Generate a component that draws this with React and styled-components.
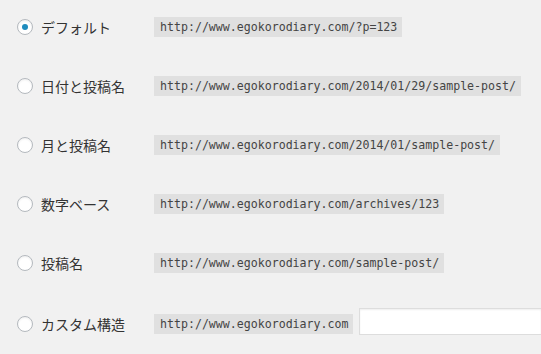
import styled, { createGlobalStyle } from "styled-components";

const GlobalStyle = createGlobalStyle`
  html, body {
    margin: 0;
    padding: 0;
    background: #f1f1f1;
    overflow: hidden;
  }
  body {
    font-family: "Noto Sans CJK JP", "Noto Sans", sans-serif;
    color: #333;
  }
`;

const List = styled.div`
  display: flex;
  flex-direction: column;
  gap: 39px;
  padding: 17px 0 20px 17px;
`;

const Row = styled.label`
  display: grid;
  grid-template-columns: 137px auto 1fr;
  align-items: center;
  min-height: 20px;
  cursor: pointer;
`;

const Choice = styled.span`
  display: flex;
  align-items: center;
  gap: 8px;
  font-size: 14px;
  line-height: 20px;
  color: #333;
  white-space: nowrap;
`;

const Radio = styled.span`
  box-sizing: border-box;
  flex: none;
  width: 16px;
  height: 16px;
  border-radius: 50%;
  border: 1px solid #b4b9be;
  background: #fff;
  box-shadow: inset 0 1px 2px rgba(0, 0, 0, 0.07);
  display: flex;
  align-items: center;
  justify-content: center;

  &::before {
    content: "";
    display: ${(p) => (p.$checked ? "block" : "none")};
    width: 6px;
    height: 6px;
    border-radius: 50%;
    background: #1e8cbe;
  }
`;

const Code = styled.code`
  justify-self: start;
  font-family: "DejaVu Sans Mono", "Liberation Mono", monospace;
  font-size: 11.6px;
  line-height: 20px;
  height: 20px;
  padding: 0 5px 0 6px;
  background: rgba(0, 0, 0, 0.07);
  color: #444;
  white-space: nowrap;
`;

const Structure = styled.input`
  box-sizing: border-box;
  width: 300px;
  max-width: calc(100vw - 359px);
  height: 27px;
  margin: -4px 0 0 6px;
  padding: 0;
  border: 1px solid #ddd;
  border-right: none;
  background: #fff;
  box-shadow: inset 0 1px 2px rgba(0, 0, 0, 0.07);
  outline: none;
`;

const base = "http://www.egokorodiary.com";

const options = [
  { label: "デフォルト", path: "/?p=123", checked: true },
  { label: "日付と投稿名", path: "/2014/01/29/sample-post/" },
  { label: "月と投稿名", path: "/2014/01/sample-post/" },
  { label: "数字ベース", path: "/archives/123" },
  { label: "投稿名", path: "/sample-post/" },
];

export default function App() {
  return (
    <>
      <GlobalStyle />
      <List>
        {options.map((o) => (
          <Row key={o.label}>
            <Choice>
              <Radio $checked={o.checked} />
              {o.label}
            </Choice>
            <Code>{base + o.path}</Code>
          </Row>
        ))}
        <Row>
          <Choice>
            <Radio />
            カスタム構造
          </Choice>
          <Code>{base}</Code>
          <Structure type="text" />
        </Row>
      </List>
    </>
  );
}
